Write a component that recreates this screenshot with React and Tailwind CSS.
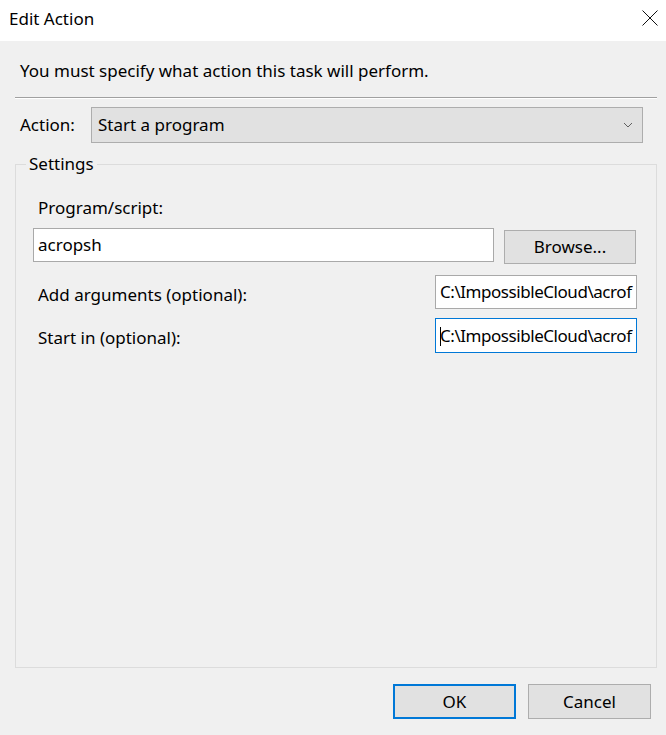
import React from "react";

const font = { fontFamily: '"Noto Sans", "Open Sans", sans-serif' };

function Chevron() {
  return (
    <svg width="10" height="6" viewBox="0 0 10 6" className="text-[#606060]">
      <path d="M1 1 L5 5 L9 1" fill="none" stroke="currentColor" strokeWidth="1" />
    </svg>
  );
}

function CloseX() {
  return (
    <svg width="16" height="16" viewBox="0 0 16 16">
      <path d="M0.5 0.5 L15.5 15.5 M15.5 0.5 L0.5 15.5" stroke="#111" strokeWidth="1" fill="none" />
    </svg>
  );
}

export default function App() {
  return (
    <div
      className="w-[666px] h-[735px] bg-[#f0f0f0] flex flex-col text-black text-[17px] leading-[20px] overflow-hidden"
      style={font}
    >
      {/* title bar */}
      <div className="h-[41px] bg-white flex items-center justify-between pl-[9px] pr-[8px] shrink-0">
        <span className="text-[17px] leading-[20px] -mt-[4px]">Edit Action</span>
        <div className="-mt-[5px]">
          <CloseX />
        </div>
      </div>

      {/* instruction */}
      <div className="pl-[20px] mt-[20px] leading-[20px]">You must specify what action this task will perform.</div>

      {/* separator */}
      <div className="ml-[15px] mr-[9px] mt-[16px] border-t border-t-[#a0a0a0] border-b border-b-white" />

      {/* action row */}
      <div className="flex items-center mt-[8px] pl-[20px] pr-[23px]">
        <span className="w-[71px] shrink-0">Action:</span>
        <div className="flex-1 h-[36px] bg-[#e1e1e1] border border-[#adadad] flex items-center justify-between pl-[6px] pr-[9px]">
          <span>Start a program</span>
          <Chevron />
        </div>
      </div>

      {/* settings group */}
      <fieldset className="ml-[15px] mr-[9px] mt-[11px] h-[514px] border border-[#dcdcdc] pl-[17px] pr-[19px]">
        <legend className="-ml-[7px] px-[3px] leading-[20px]">Settings</legend>
        <div className="pl-[5px] mt-[24px]">Program/script:</div>
        <div className="flex items-start mt-[10px]">
          <div className="w-[461px] h-[34px] bg-white border border-[#a9a9a9] flex items-center pl-[4px]">
            acropsh
          </div>
          <div className="ml-[10px] mt-[2px] w-[132px] h-[34px] bg-[#e1e1e1] border border-[#adadad] flex items-center justify-center">
            Browse...
          </div>
        </div>
        <div className="flex items-start justify-between mt-[11px]">
          <span className="pl-[5px] mt-[10px]">Add arguments (optional):</span>
          <div className="w-[202px] h-[34px] bg-white border border-[#a9a9a9] flex items-center pl-[4px] whitespace-nowrap tracking-[-0.45px]">
            C:\ImpossibleCloud\acrof
          </div>
        </div>
        <div className="flex items-start justify-between mt-[9px]">
          <span className="pl-[5px] mt-[10px]">Start in (optional):</span>
          <div className="relative w-[202px] h-[35px] bg-white border border-[#0078d7] flex items-center pl-[4px] whitespace-nowrap tracking-[-0.45px]">
            <span className="absolute left-[4px] top-[8px] w-px h-[19px] bg-black" />
            C:\ImpossibleCloud\acrof
          </div>
        </div>
      </fieldset>

      {/* buttons */}
      <div className="flex justify-end gap-[12px] mt-[16px] pr-[15px]">
        <div className="w-[123px] h-[35px] bg-[#e1e1e1] border-2 border-[#0078d7] flex items-center justify-center">
          OK
        </div>
        <div className="w-[123px] h-[35px] bg-[#e1e1e1] border border-[#adadad] flex items-center justify-center">
          Cancel
        </div>
      </div>
    </div>
  );
}
